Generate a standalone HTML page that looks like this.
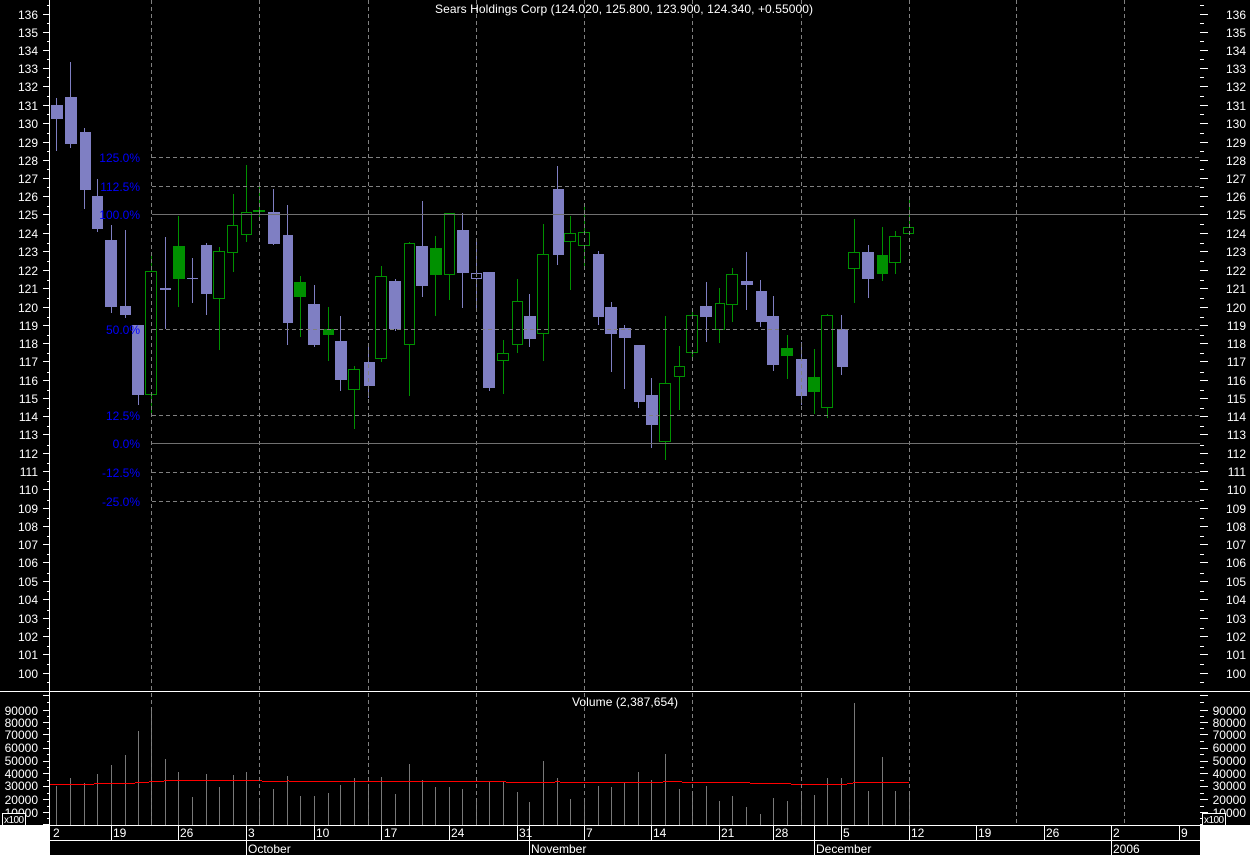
<!DOCTYPE html>
<html>
<head>
<meta charset="utf-8">
<style>
html,body{margin:0;padding:0;background:#000;width:1250px;height:855px;overflow:hidden}
svg{display:block}
text{font-family:"Liberation Sans",Arial,sans-serif;font-size:12px;fill:#fff}
.r{text-anchor:end}
.b text,text.b{fill:#0000ff}
.c{shape-rendering:crispEdges}
</style>
</head>
<body>
<svg width="1250" height="855" viewBox="0 0 1250 855" xmlns="http://www.w3.org/2000/svg">
<rect width="1250" height="855" fill="#000"/>
<g class="c">
<!-- volume bars -->
<path fill="none" stroke="#787878" d="M56.5 786V825M70.5 778V825M84.5 783V825M97.5 774V825M111.5 765V825M125.5 755V825M138.5 731V825M151.5 710V825M165.5 759V825M178.5 772V825M192.5 797V825M206.5 774V825M219.5 787V825M233.5 775V825M246.5 772V825M259.5 800V825M273.5 789V825M287.5 776V825M300.5 796V825M314.5 796V825M328.5 793V825M340.5 785V825M354.5 778V825M368.5 787V825M381.5 777V825M395.5 794V825M409.5 764V825M422.5 780V825M435.5 787V825M449.5 787V825M462.5 789V825M476.5 798V825M489.5 782V825M503.5 782V825M517.5 792V825M529.5 802V825M543.5 761V825M557.5 778V825M570.5 799V825M584.5 798V825M598.5 786V825M611.5 787V825M624.5 783V825M638.5 772V825M651.5 780V825M665.5 754V825M679.5 789V825M692.5 793V825M706.5 786V825M719.5 801V825M732.5 796V825M746.5 807V825M760.5 814V825M773.5 798V825M787.5 801V825M801.5 795V825M814.5 795V825M827.5 778V825M841.5 778V825M854.5 703V825M868.5 791V825M882.5 757V825M895.5 791V825M909.5 795V825"/>
<!-- purple wicks -->
<path fill="none" stroke="#7f7fc3" d="M56.5 98V151M70.5 62V148M84.5 128V209M97.5 179V232M111.5 225V313M125.5 230V318M138.5 325V405M165.5 237V329M192.5 258V303M206.5 243V315M273.5 189V245M287.5 205V345M314.5 285V347M340.5 316V391M368.5 343V398M395.5 279V331M422.5 201V297M462.5 213V308M476.5 240V309M489.5 272V391M529.5 294V347M557.5 166V265M598.5 251V325M611.5 302V372M624.5 325V389M638.5 345V408M651.5 378V448M706.5 282V342M746.5 252V310M760.5 280V327M773.5 296V371M801.5 342V405M841.5 315V375M868.5 245V298"/>
<!-- green wicks -->
<path fill="none" stroke="#009000" d="M151.5 253V413M178.5 216V307M219.5 247V350M233.5 194V272M246.5 165V242M259.5 183V220M300.5 276V337M328.5 307V361M354.5 366V429M381.5 266V362M409.5 242V396M435.5 236V316M449.5 213V300M503.5 340V394M517.5 279V353M543.5 224V361M570.5 216V290M584.5 205V270M665.5 316V460M679.5 346V410M692.5 310V360M719.5 288V343M732.5 268V322M787.5 335V379M814.5 349V414M827.5 314V418M854.5 219V303M882.5 227V281M895.5 231V274M909.5 200V234"/>
<!-- purple bodies -->
<path fill="#7f7fc3" d="M51 105H63V119H51zM65 97H77V144H65zM80 132H91V190H80zM92 196H103V229H92zM105 240H117V307H105zM120 306H131V315H120zM132 325H144V395H132zM160 288H171V290H160zM187 278H198V279H187zM201 245H212V294H201zM268 212H280V244H268zM283 235H293V323H283zM308 304H320V345H308zM335 341H347V380H335zM364 362H375V386H364zM389 281H401V329H389zM416 246H428V286H416zM457 230H469V273H457zM483 272H495V388H483zM524 316H536V339H524zM553 189H564V255H553zM593 254H604V317H593zM605 307H617V334H605zM619 328H631V338H619zM634 345H645V402H634zM646 395H658V425H646zM700 306H712V317H700zM741 281H753V285H741zM756 291H767V322H756zM767 316H779V365H767zM796 359H807V396H796zM837 329H848V367H837zM862 252H874V279H862z"/>
<!-- green solid bodies -->
<path fill="#009000" d="M173 246H185V279H173zM253 210H265V212H253zM294 282H306V297H294zM323 329H334V335H323zM430 248H442V275H430zM781 348H793V356H781zM808 377H820V392H808zM877 255H888V274H877z"/>
<!-- hollow purple -->
<path fill="#000" stroke="#7f7fc3" d="M471.5 273.5H481.5V278.5H471.5z"/>
<!-- hollow green -->
<path fill="#000" stroke="#009000" d="M145.5 271.5H156.5V394.5H145.5zM213.5 251.5H224.5V298.5H213.5zM227.5 225.5H237.5V252.5H227.5zM241.5 212.5H251.5V234.5H241.5zM348.5 369.5H359.5V389.5H348.5zM375.5 276.5H386.5V358.5H375.5zM404.5 243.5H414.5V344.5H404.5zM444.5 213.5H454.5V274.5H444.5zM497.5 353.5H508.5V360.5H497.5zM512.5 301.5H522.5V344.5H512.5zM537.5 254.5H548.5V333.5H537.5zM564.5 233.5H575.5V241.5H564.5zM578.5 232.5H589.5V245.5H578.5zM659.5 383.5H670.5V441.5H659.5zM674.5 366.5H684.5V376.5H674.5zM686.5 315.5H697.5V352.5H686.5zM715.5 303.5H724.5V329.5H715.5zM726.5 274.5H737.5V304.5H726.5zM821.5 315.5H832.5V407.5H821.5zM848.5 252.5H859.5V268.5H848.5zM889.5 236.5H900.5V262.5H889.5zM903.5 227.5H913.5V233.5H903.5z"/>
<!-- red avg -->
<path fill="none" stroke="#ff0000" d="M50 784.5H94M94 783.5H135M135 782.5H149M149 781.5H164M164 780.5H262M262 781.5H287M287 780.5H289M289 781.5H506M506 782.5H555M555 781.5H560M560 782.5H663M663 781.5H682M682 782.5H750M750 783.5H791M791 784.5H847M847 783.5H853M853 782.5H909"/>
<!-- grid -->
<path fill="none" stroke="#808080" stroke-dasharray="4 3" d="M151.5 0V825M259.5 0V825M368.5 0V825M476.5 0V825M584.5 0V825M692.5 0V825M801.5 0V825M909.5 0V825M1016.5 0V825M1124.5 0V825"/>
<path fill="none" stroke="#808080" stroke-dasharray="4 3" d="M152 157.5H1200M152 186.5H1200M152 329.5H1200M152 415.5H1200M152 472.5H1200M152 501.5H1200"/>
<path fill="none" stroke="#707070" d="M152 214.5H1200M152 443.5H1200"/>
<!-- axes -->
<path fill="none" stroke="#fff" d="M49.5 0V825M0 691.5H1250M50 825.5H1200M50 840.5H1200"/>
<!-- left major ticks -->
<path fill="none" stroke="#fff" d="M43 14.5H49M43 32.5H49M43 50.5H49M43 68.5H49M43 86.5H49M43 105.5H49M43 123.5H49M43 142.5H49M43 160.5H49M43 178.5H49M43 196.5H49M43 214.5H49M43 233.5H49M43 251.5H49M43 270.5H49M43 288.5H49M43 307.5H49M43 325.5H49M43 343.5H49M43 361.5H49M43 380.5H49M43 398.5H49M43 416.5H49M43 434.5H49M43 453.5H49M43 471.5H49M43 489.5H49M43 508.5H49M43 526.5H49M43 544.5H49M43 562.5H49M43 581.5H49M43 599.5H49M43 618.5H49M43 636.5H49M43 654.5H49M43 673.5H49M43 695.5H49M43 710.5H49M43 722.5H49M43 734.5H49M43 748.5H49M43 761.5H49M43 773.5H49M43 786.5H49M43 799.5H49M43 812.5H49M43 824.5H49"/>
<!-- left minor ticks -->
<path fill="none" stroke="#fff" d="M47 5.5H49M47 23.5H49M47 41.5H49M47 59.5H49M47 77.5H49M47 96.5H49M47 114.5H49M47 133.5H49M47 151.5H49M47 169.5H49M47 187.5H49M47 206.5H49M47 224.5H49M47 243.5H49M47 261.5H49M47 280.5H49M47 298.5H49M47 317.5H49M47 335.5H49M47 353.5H49M47 372.5H49M47 390.5H49M47 408.5H49M47 426.5H49M47 445.5H49M47 463.5H49M47 481.5H49M47 500.5H49M47 518.5H49M47 536.5H49M47 554.5H49M47 573.5H49M47 591.5H49M47 610.5H49M47 628.5H49M47 646.5H49M47 664.5H49M47 682.5H49M47 702.5H49M47 716.5H49M47 728.5H49M47 741.5H49M47 754.5H49M47 767.5H49M47 780.5H49M47 793.5H49M47 806.5H49M47 818.5H49"/>
<!-- right major ticks -->
<path fill="none" stroke="#fff" d="M1200 14.5H1208M1200 32.5H1208M1200 50.5H1208M1200 68.5H1208M1200 86.5H1208M1200 105.5H1208M1200 123.5H1208M1200 142.5H1208M1200 160.5H1208M1200 178.5H1208M1200 196.5H1208M1200 214.5H1208M1200 233.5H1208M1200 251.5H1208M1200 270.5H1208M1200 288.5H1208M1200 307.5H1208M1200 325.5H1208M1200 343.5H1208M1200 361.5H1208M1200 380.5H1208M1200 398.5H1208M1200 416.5H1208M1200 434.5H1208M1200 453.5H1208M1200 471.5H1208M1200 489.5H1208M1200 508.5H1208M1200 526.5H1208M1200 544.5H1208M1200 562.5H1208M1200 581.5H1208M1200 599.5H1208M1200 618.5H1208M1200 636.5H1208M1200 654.5H1208M1200 673.5H1208M1200 695.5H1208M1200 710.5H1208M1200 722.5H1208M1200 734.5H1208M1200 748.5H1208M1200 761.5H1208M1200 773.5H1208M1200 786.5H1208M1200 799.5H1208M1200 812.5H1208M1200 824.5H1208"/>
<!-- right minor ticks -->
<path fill="none" stroke="#fff" d="M1200 5.5H1204M1200 23.5H1204M1200 41.5H1204M1200 59.5H1204M1200 77.5H1204M1200 96.5H1204M1200 114.5H1204M1200 133.5H1204M1200 151.5H1204M1200 169.5H1204M1200 187.5H1204M1200 206.5H1204M1200 224.5H1204M1200 243.5H1204M1200 261.5H1204M1200 280.5H1204M1200 298.5H1204M1200 317.5H1204M1200 335.5H1204M1200 353.5H1204M1200 372.5H1204M1200 390.5H1204M1200 408.5H1204M1200 426.5H1204M1200 445.5H1204M1200 463.5H1204M1200 481.5H1204M1200 500.5H1204M1200 518.5H1204M1200 536.5H1204M1200 554.5H1204M1200 573.5H1204M1200 591.5H1204M1200 610.5H1204M1200 628.5H1204M1200 646.5H1204M1200 664.5H1204M1200 682.5H1204M1200 702.5H1204M1200 716.5H1204M1200 728.5H1204M1200 741.5H1204M1200 754.5H1204M1200 767.5H1204M1200 780.5H1204M1200 793.5H1204M1200 806.5H1204M1200 818.5H1204"/>
<!-- date ticks -->
<path fill="none" stroke="#fff" d="M111.5 825V840M178.5 825V840M246.5 825V855M314.5 825V840M381.5 825V840M449.5 825V840M517.5 825V840M529.5 825V855M584.5 825V840M651.5 825V840M719.5 825V840M773.5 825V840M814.5 825V855M841.5 825V840M909.5 825V840M976.5 825V840M1044.5 825V840M1111.5 825V855M1179.5 825V840"/>
<!-- white corners -->
<rect x="0" y="825" width="50" height="30" fill="#fff"/>
<rect x="1200" y="825" width="50" height="30" fill="#fff"/>
</g>

<!-- left price labels -->
<g class="r">
<text x="38" y="19">136</text><text x="38" y="37">135</text><text x="38" y="55">134</text><text x="38" y="73">133</text><text x="38" y="91">132</text><text x="38" y="110">131</text><text x="38" y="128">130</text><text x="38" y="147">129</text><text x="38" y="165">128</text><text x="38" y="183">127</text><text x="38" y="201">126</text><text x="38" y="219">125</text><text x="38" y="238">124</text><text x="38" y="256">123</text><text x="38" y="275">122</text><text x="38" y="293">121</text><text x="38" y="312">120</text><text x="38" y="330">119</text><text x="38" y="348">118</text><text x="38" y="366">117</text><text x="38" y="385">116</text><text x="38" y="403">115</text><text x="38" y="421">114</text><text x="38" y="439">113</text><text x="38" y="458">112</text><text x="38" y="476">111</text><text x="38" y="494">110</text><text x="38" y="513">109</text><text x="38" y="531">108</text><text x="38" y="549">107</text><text x="38" y="567">106</text><text x="38" y="586">105</text><text x="38" y="604">104</text><text x="38" y="623">103</text><text x="38" y="641">102</text><text x="38" y="659">101</text><text x="38" y="678">100</text>
<text x="38" y="715">90000</text><text x="38" y="727">80000</text><text x="38" y="739">70000</text><text x="38" y="752">60000</text><text x="38" y="765">50000</text><text x="38" y="778">40000</text><text x="38" y="790">30000</text><text x="38" y="804">20000</text><text x="38" y="817">10000</text>
</g>
<!-- right price labels -->
<g class="r">
<text x="1246" y="19">136</text><text x="1246" y="37">135</text><text x="1246" y="55">134</text><text x="1246" y="73">133</text><text x="1246" y="91">132</text><text x="1246" y="110">131</text><text x="1246" y="128">130</text><text x="1246" y="147">129</text><text x="1246" y="165">128</text><text x="1246" y="183">127</text><text x="1246" y="201">126</text><text x="1246" y="219">125</text><text x="1246" y="238">124</text><text x="1246" y="256">123</text><text x="1246" y="275">122</text><text x="1246" y="293">121</text><text x="1246" y="312">120</text><text x="1246" y="330">119</text><text x="1246" y="348">118</text><text x="1246" y="366">117</text><text x="1246" y="385">116</text><text x="1246" y="403">115</text><text x="1246" y="421">114</text><text x="1246" y="439">113</text><text x="1246" y="458">112</text><text x="1246" y="476">111</text><text x="1246" y="494">110</text><text x="1246" y="513">109</text><text x="1246" y="531">108</text><text x="1246" y="549">107</text><text x="1246" y="567">106</text><text x="1246" y="586">105</text><text x="1246" y="604">104</text><text x="1246" y="623">103</text><text x="1246" y="641">102</text><text x="1246" y="659">101</text><text x="1246" y="678">100</text>
<text x="1246" y="715">90000</text><text x="1246" y="727">80000</text><text x="1246" y="739">70000</text><text x="1246" y="752">60000</text><text x="1246" y="765">50000</text><text x="1246" y="778">40000</text><text x="1246" y="790">30000</text><text x="1246" y="804">20000</text><text x="1246" y="817">10000</text>
</g>

<!-- x100 boxes -->
<g class="c">
<rect x="2.5" y="813.5" width="23" height="12" fill="#000" stroke="#fff"/>
<rect x="1202.5" y="813.5" width="23" height="12" fill="#000" stroke="#fff"/>
</g>
<text x="4" y="823" style="font-size:10px" textLength="20">x100</text>
<text x="1204" y="823" style="font-size:10px" textLength="20">x100</text>

<!-- percent labels -->
<g class="r b">
<text x="140" y="162">125.0%</text>
<text x="140" y="191">112.5%</text>
<text x="140" y="219">100.0%</text>
<text x="140" y="334">50.0%</text>
<text x="140" y="420">12.5%</text>
<text x="140" y="448">0.0%</text>
<text x="140" y="477">-12.5%</text>
<text x="140" y="506">-25.0%</text>
</g>

<!-- titles -->
<text x="435" y="13" textLength="378">Sears Holdings Corp (124.020, 125.800, 123.900, 124.340, +0.55000)</text>
<text x="572" y="706" textLength="106">Volume (2,387,654)</text>

<!-- dates -->
<text x="53" y="837">2</text><text x="113" y="837">19</text><text x="180" y="837">26</text><text x="248" y="837">3</text><text x="316" y="837">10</text><text x="384" y="837">17</text><text x="451" y="837">24</text><text x="519" y="837">31</text><text x="586" y="837">7</text><text x="653" y="837">14</text><text x="721" y="837">21</text><text x="775" y="837">28</text><text x="843" y="837">5</text><text x="911" y="837">12</text><text x="978" y="837">19</text><text x="1046" y="837">26</text><text x="1113" y="837">2</text><text x="1181" y="837">9</text>
<text x="248" y="853">October</text><text x="531" y="853">November</text><text x="816" y="853">December</text><text x="1113" y="853">2006</text>
</svg>
</body>
</html>
